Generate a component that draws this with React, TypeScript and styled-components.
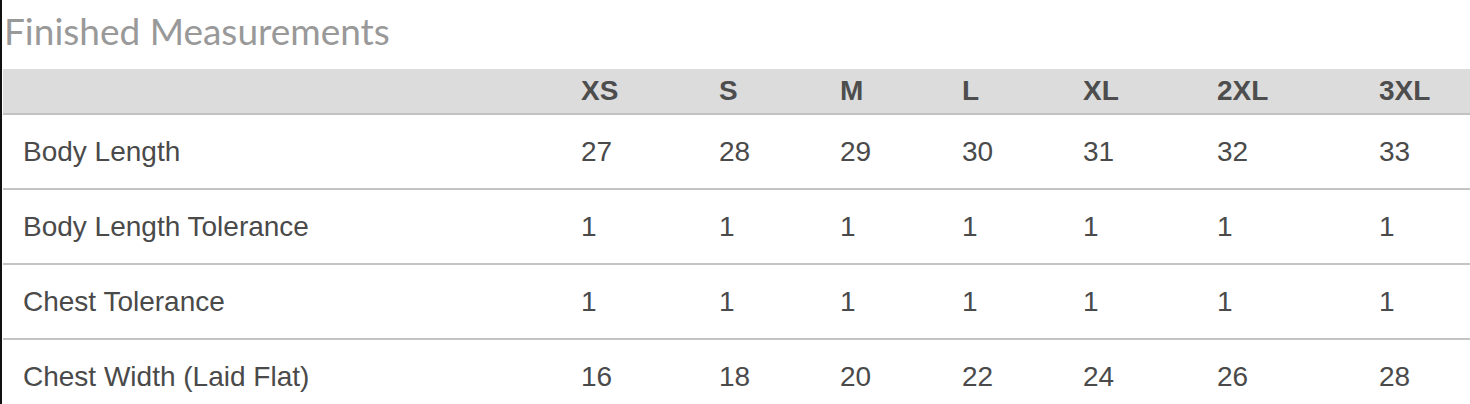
import styled, { createGlobalStyle } from 'styled-components';

const GlobalStyle = createGlobalStyle`
  html, body {
    margin: 0;
    padding: 0;
    background: #ffffff;
  }
`;

const Page = styled.div`
  width: 1470px;
  height: 404px;
  overflow: hidden;
  box-sizing: border-box;
  border-left: 2px solid #111111;
  padding-left: 1px;
`;

const Title = styled.h2`
  margin: 0;
  padding: 9px 0 0 1px;
  height: 69px;
  box-sizing: border-box;
  font-family: Lato, 'Noto Sans', sans-serif;
  font-weight: 400;
  font-size: 37px;
  line-height: 44px;
  color: #999999;
`;

const Table = styled.div`
  display: grid;
  grid-template-columns: 558px 138px 121px 122px 121px 134px 162px 1fr;
  font-family: 'Liberation Sans', Arial, sans-serif;
  color: #4a4a4a;
`;

const HeadCell = styled.div`
  height: 44px;
  background: #dcdcdc;
  border-bottom: 2px solid #c2c2c2;
  padding-left: 20px;
  display: flex;
  align-items: center;
  font-weight: 700;
  font-size: 28px;
  color: #4d4d4d;
  white-space: nowrap;
`;

const Cell = styled.div<{ last?: boolean }>`
  height: 73px;
  border-bottom: ${({ last }) => (last ? 'none' : '2px solid #c4c4c4')};
  padding-left: 20px;
  display: flex;
  align-items: center;
  font-size: 28px;
  white-space: nowrap;
`;

const sizes = ['XS', 'S', 'M', 'L', 'XL', '2XL', '3XL'];

const rows: { label: string; values: number[] }[] = [
  { label: 'Body Length', values: [27, 28, 29, 30, 31, 32, 33] },
  { label: 'Body Length Tolerance', values: [1, 1, 1, 1, 1, 1, 1] },
  { label: 'Chest Tolerance', values: [1, 1, 1, 1, 1, 1, 1] },
  { label: 'Chest Width (Laid Flat)', values: [16, 18, 20, 22, 24, 26, 28] },
];

export default function App() {
  return (
    <Page>
      <GlobalStyle />
      <Title>Finished Measurements</Title>
      <Table>
        <HeadCell />
        {sizes.map((s) => (
          <HeadCell key={s}>{s}</HeadCell>
        ))}
        {rows.map((row, i) => {
          const last = i === rows.length - 1;
          return [
            <Cell key={`${row.label}-l`} last={last}>{row.label}</Cell>,
            ...row.values.map((v, j) => (
              <Cell key={`${row.label}-${j}`} last={last}>{v}</Cell>
            )),
          ];
        })}
      </Table>
    </Page>
  );
}
